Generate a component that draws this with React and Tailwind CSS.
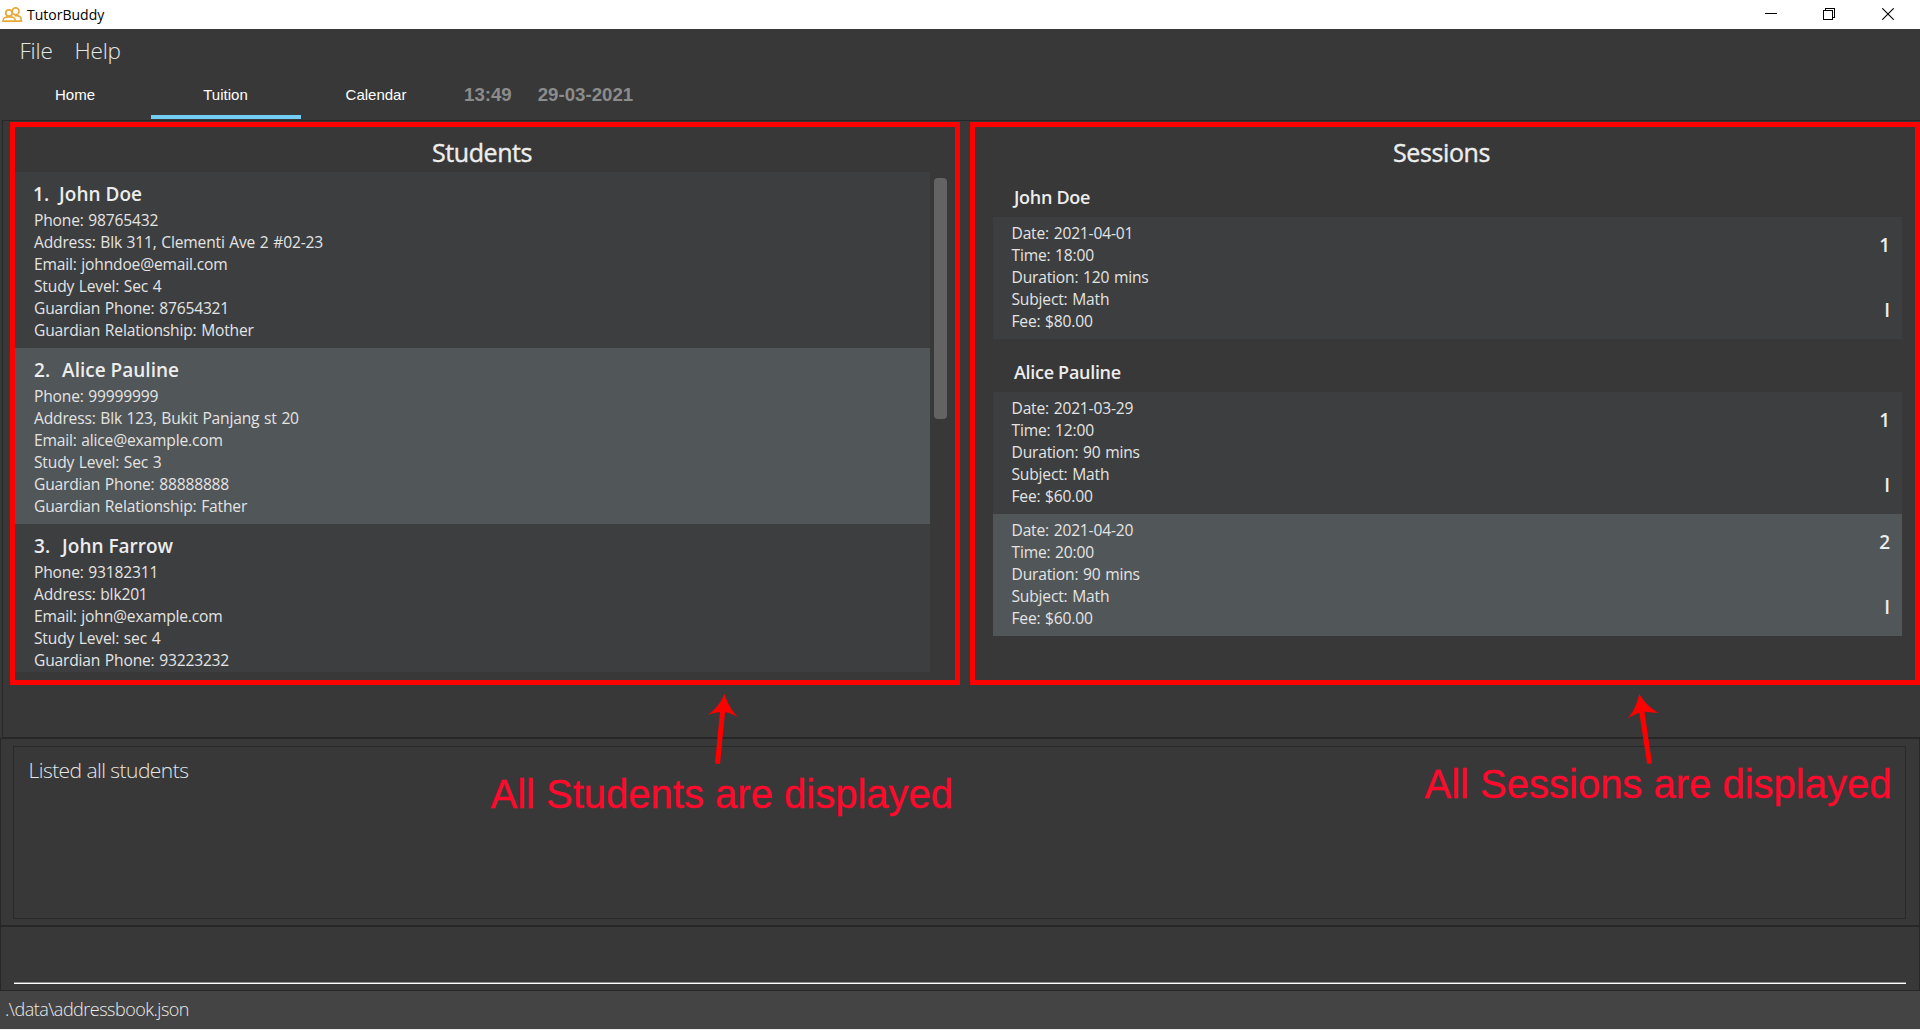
const students = [
  {
    name: "John Doe",
    lines: [
      "Phone: 98765432",
      "Address: Blk 311, Clementi Ave 2 #02-23",
      "Email: johndoe@email.com",
      "Study Level: Sec 4",
      "Guardian Phone: 87654321",
      "Guardian Relationship: Mother",
    ],
  },
  {
    name: "Alice Pauline",
    lines: [
      "Phone: 99999999",
      "Address: Blk 123, Bukit Panjang st 20",
      "Email: alice@example.com",
      "Study Level: Sec 3",
      "Guardian Phone: 88888888",
      "Guardian Relationship: Father",
    ],
  },
  {
    name: "John Farrow",
    lines: [
      "Phone: 93182311",
      "Address: blk201",
      "Email: john@example.com",
      "Study Level: sec 4",
      "Guardian Phone: 93223232",
    ],
  },
];

const sessionGroups = [
  {
    name: "John Doe",
    sessions: [
      ["Date: 2021-04-01", "Time: 18:00", "Duration: 120 mins", "Subject: Math", "Fee: $80.00"],
    ],
  },
  {
    name: "Alice Pauline",
    sessions: [
      ["Date: 2021-03-29", "Time: 12:00", "Duration: 90 mins", "Subject: Math", "Fee: $60.00"],
      ["Date: 2021-04-20", "Time: 20:00", "Duration: 90 mins", "Subject: Math", "Fee: $60.00"],
    ],
  },
];

function rowColor(index) {
  return index % 2 === 0 ? "bg-[#3c3e3f]" : "bg-[#515658]";
}

function Lines({ lines }) {
  return (
    <div className="text-[15.6px] leading-[22px] tracking-[-0.18px] [word-spacing:0.8px] text-[#e4e4e4]">
      {lines.map((line) => (
        <div key={line}>{line}</div>
      ))}
    </div>
  );
}

function TitleBar() {
  return (
    <div className="flex h-[29px] items-center bg-white pl-[2px] text-black">
      <svg width="21" height="16" viewBox="0 0 21 16" fill="none" stroke="#e9a93a" strokeWidth="1.7">
        <circle cx="13.6" cy="4.2" r="3.4" />
        <circle cx="7" cy="6" r="3.2" fill="#fff" />
        <path d="M12.6 8.6C17.6 8.2 19.4 10 19.4 14.2H14" />
        <path d="M1 14.2C1 10.6 3 9.8 7.2 9.8S13.4 10.6 13.4 14.2Z" fill="#fff" />
      </svg>
      <span className="ml-[4px] text-[14px]">TutorBuddy</span>
      <div className="mb-px ml-auto mr-[26px] flex">
        <svg width="12" height="12" shapeRendering="crispEdges">
          <rect y="5" width="12" height="1" fill="#000" />
        </svg>
        <svg className="ml-[46px]" width="12" height="12" fill="none" stroke="#000" shapeRendering="crispEdges">
          <path d="M0.5 2.5H9.5V11.5H0.5ZM2.5 2.5V0.5H11.5V9.5H9.5" />
        </svg>
        <svg className="ml-[47px]" width="12" height="12" stroke="#000" strokeWidth="1.1">
          <path d="M0.3 0.3L11.7 11.7M11.7 0.3L0.3 11.7" />
        </svg>
      </div>
    </div>
  );
}

function Tab({ label, active }) {
  return (
    <div
      className={
        "h-[49px] w-[150px] border-b-4 pt-px text-center text-[15px] leading-[47px] text-white " +
        (active ? "border-[#73cdf5]" : "border-transparent")
      }
    >
      {label}
    </div>
  );
}

function Students() {
  return (
    <section className="flex h-[563px] w-[950px] flex-col border-[5px] border-[#ff0000] pt-[8px]">
      <Title className="pr-[6px]">Students</Title>
      <div className="mt-[3px] flex h-[500px]">
        <div className="w-[915px] overflow-hidden">
          {students.map((s, i) => (
            <div key={s.name} className={"h-[176px] pl-[19px] pt-[9px] " + rowColor(i)}>
              <div className="mb-[2px] flex h-[26px] text-[19px] font-semibold leading-[26px] text-[#ededed]">
                <span className={i === 0 ? "-ml-px mr-[10px]" : "mr-[12px]"}>{i + 1}.</span>
                <span>{s.name}</span>
              </div>
              <Lines lines={s.lines} />
            </div>
          ))}
        </div>
        <div className="ml-[4px] mt-[6px] h-[241px] w-[13px] rounded-[4px] bg-[#636363]" />
      </div>
    </section>
  );
}

function Title({ children, className }) {
  return (
    <h2
      className={
        "text-center text-[25px] leading-[34px] tracking-[-0.4px] text-[#ededed] [-webkit-text-stroke:0.4px_#ededed] " +
        className
      }
    >
      {children}
    </h2>
  );
}

function Sessions() {
  return (
    <section className="flex h-[563px] w-[950px] flex-col border-[5px] border-[#ff0000] pl-[18px] pr-[13px] pt-[8px]">
      <Title className="pr-[12px]">Sessions</Title>
      <div className="mt-[16px] flex flex-col gap-[21px]">
        {sessionGroups.map((g) => (
          <div key={g.name}>
            <h3 className="mb-[8px] pl-[21px] text-[18px] font-semibold leading-[24px] tracking-[-0.3px] text-[#ededed]">
              {g.name}
            </h3>
            {g.sessions.map((lines, i) => (
              <div key={i} className={"flex h-[122px] justify-between pl-[18.500px] pr-[12px] pt-[5px] " + rowColor(i)}>
                <Lines lines={lines} />
                <div className="flex flex-col items-end gap-[39px] pt-[10px] text-[19px] font-semibold leading-[26px] text-[#ededed]">
                  <span>{i + 1}</span>
                  <span>I</span>
                </div>
              </div>
            ))}
          </div>
        ))}
      </div>
    </section>
  );
}

function Note({ children, className }) {
  return (
    <div
      className={
        "absolute whitespace-nowrap font-['Liberation_Sans',Arial,sans-serif] text-[40px] leading-[46px] text-[#ff0a2d] [-webkit-text-stroke:0.3px_#ff0a2d] " +
        className
      }
    >
      {children}
    </div>
  );
}

export default function App() {
  return (
    <div className="relative flex h-[1030px] w-[1920px] flex-col overflow-hidden bg-[#383838] font-['Open_Sans','Noto_Sans',sans-serif]">
      <TitleBar />
      <nav className="mt-[7px] flex h-[30px] gap-[22px] pl-[19.500px] text-[22.5px] font-light leading-[30px] tracking-[-0.2px] text-[#e6e6e6]">
        <span>File</span>
        <span>Help</span>
      </nav>
      <div className="mt-[4px] flex h-[50px] font-['Liberation_Sans',Arial,sans-serif]">
        <div className="flex gap-[0.5px]">
          <Tab label="Home" />
          <Tab label="Tuition" active />
          <Tab label="Calendar" />
        </div>
        <div className="ml-[13px] flex gap-[26px] text-[18.67px] font-bold leading-[49px] text-[#8c8c8c]">
          <span>13:49</span>
          <span>29-03-2021</span>
        </div>
      </div>

      <main className="ml-[2px] flex h-[618px] gap-[10px] border border-r-0 border-[#272727] pl-[7px] pt-px">
        <Students />
        <Sessions />
      </main>
      <div className="h-[188px] border border-[#272727] px-[12px] pt-[7px]">
        <div className="mr-px h-[173px] border border-[#292929] pl-[14.500px] pt-[9px] text-[21px] font-light leading-[28px] tracking-[-0.55px] text-[#e6e6e6]">
          Listed all students
        </div>
      </div>
      <div className="flex h-[65px] flex-col justify-end border border-[#272727] px-[13px] pb-[6px]">
        <div className="h-[2px] border-t border-[#8a8a8a] bg-white" />
      </div>
      <footer className="h-[38px] bg-[#444444] pl-[5px] text-[18px] font-light leading-[36px] tracking-[-0.5px] text-[#ececec]">
        .\data\addressbook.json
      </footer>
      <div className="h-px bg-[#f2f2f2]" />

      <Note className="left-[490.500px] top-[771px]">All Students are displayed</Note>
      <Note className="left-[1424.500px] top-[761px]">All Sessions are displayed</Note>
      <svg className="absolute left-[700px] top-[690px]" width="46" height="78" fill="#ff0000">
        <path d="M24.5 4C27.5 13 31 20 38 27.3C33 24.3 29 22.8 25 22L20 74L15 73.5L20 22C15.5 22.5 11.5 23.5 7 25.3C15.5 20 20.5 13 24.5 4Z" />
      </svg>
      <svg className="absolute left-[1620px] top-[690px]" width="46" height="78" fill="#ff0000">
        <path d="M19.3 4C24.5 12.5 30 18 38.5 22.8C33.5 22.8 29 22.2 24.5 21.8L32 73.3L27.2 74L19.3 22.8C15.5 24.2 11.5 26 7.5 28.8C13.5 21.5 17 14 19.3 4Z" />
      </svg>
    </div>
  );
}
